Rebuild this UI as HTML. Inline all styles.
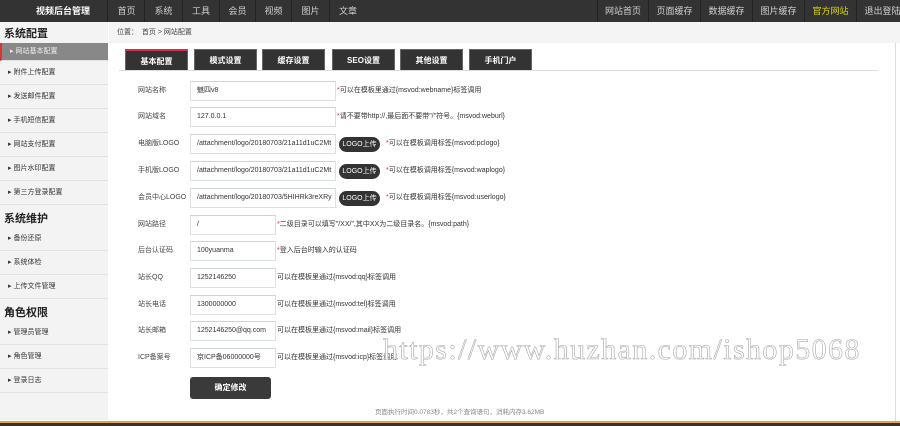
<!DOCTYPE html>
<html><head><meta charset="utf-8">
<style>
*{margin:0;padding:0;box-sizing:border-box}
body{width:900px;height:426px;overflow:hidden;position:relative;background:#fff;font-family:"Liberation Sans","Noto Sans CJK SC",sans-serif;font-size:8px;color:#333}
.hd{position:absolute;left:0;top:0;width:900px;height:22px;background:#333}
.logo{position:absolute;left:0;top:0;width:108px;height:22px;color:#fff;font-weight:bold;font-size:9px;line-height:22px;padding-left:36px;border-right:1px solid #222}
.nav a{position:absolute;top:0;height:22px;line-height:22px;color:#d0d0d0;font-size:9px;text-align:center;border-right:1px solid #222}
.side{position:absolute;left:0;top:22px;width:108px;height:398px;background:#f3f3f3}
.side h3{position:absolute;left:4px;font-size:11px;color:#222;font-weight:bold}
.side .it{position:absolute;left:0;width:108px;height:24px;line-height:24px;padding-left:8px;font-size:7px;color:#333;border-bottom:1px solid #e2e2e2}
.side .it:before{content:"▸ ";font-size:7px}
.side .on{background:#888;color:#eee;border-left:2px solid #d33}
.bc{position:absolute;left:109px;top:22px;width:791px;height:21px;background:#f4f4f4;font-size:7px;line-height:21px;padding-left:8px;color:#444}
.tab{position:absolute;top:49px;height:21px;width:63px;background:#333;color:#fff;font-weight:bold;font-size:8px;text-align:center;line-height:22px;border:1px solid #666;border-bottom:none}
.uline{position:absolute;left:119px;top:70px;width:759px;height:1px;background:#ddd}
.lb{position:absolute;left:138px;font-size:7px;color:#444;line-height:18px}
.in{position:absolute;left:190px;height:20px;border:1px solid #dcdfe3;border-top-color:#cfd3d8;font-size:7px;line-height:18px;padding-left:6px;color:#333;background:#fff;white-space:nowrap;overflow:hidden}
.tip{position:absolute;font-size:7px;line-height:18px;color:#333;white-space:nowrap}
.tip b{color:#e22;font-weight:normal}
.btnl{position:absolute;left:339px;width:41px;height:15px;border-radius:8px;background:#333;color:#fff;font-size:7px;text-align:center;line-height:15px}
.sub{position:absolute;left:190px;top:377px;width:81px;height:22px;background:#3a3a3a;border-radius:3px;color:#fff;font-size:8px;font-weight:bold;text-align:center;line-height:22px}
.ft{position:absolute;left:375px;top:406px;font-size:6.5px;color:#888}
.wm{position:absolute;left:383px;top:333px;font-family:"Liberation Serif",serif;font-size:30px;color:#fff;-webkit-text-stroke:0.6px #aaa;letter-spacing:1.4px}
.bot{position:absolute;left:0;top:421px;width:900px;height:5px;background:#333;border-top:2px solid #e8a050}
.rb{position:absolute;left:895px;top:43px;width:1px;height:378px;background:#ddd}
</style></head><body>
<div class="hd">
<div class="logo">视频后台管理</div>
<div class="nav">
<a style="left:109px;width:36px">首页</a><a style="left:145px;width:38px">系统</a><a style="left:183px;width:37px">工具</a><a style="left:220px;width:36px">会员</a><a style="left:256px;width:36px">视频</a><a style="left:292px;width:38px">图片</a><a style="left:330px;width:36px;border:none">文章</a>
<a style="left:597px;width:52px;border-left:1px solid #222">网站首页</a><a style="left:649px;width:52px">页面缓存</a><a style="left:701px;width:52px">数据缓存</a><a style="left:753px;width:52px">图片缓存</a><a style="left:805px;width:52px;color:#dd0">官方网站</a><a style="left:857px;width:52px">退出登陆</a>
</div></div>
<div class="side">
<h3 style="top:3px">系统配置</h3>
<div class="it on" style="top:21px;height:18px;line-height:18px">网站基本配置</div>
<div class="it" style="top:39px">附件上传配置</div>
<div class="it" style="top:63px">发送邮件配置</div>
<div class="it" style="top:87px">手机短信配置</div>
<div class="it" style="top:111px">网站支付配置</div>
<div class="it" style="top:135px">图片水印配置</div>
<div class="it" style="top:159px">第三方登录配置</div>
<h3 style="top:188px">系统维护</h3>
<div class="it" style="top:205px">备份还原</div>
<div class="it" style="top:229px">系统体检</div>
<div class="it" style="top:253px">上传文件管理</div>
<div class="it" style="top:277px;border:none;height:1px"></div>
<h3 style="top:282px">角色权限</h3>
<div class="it" style="top:299px">管理员管理</div>
<div class="it" style="top:323px">角色管理</div>
<div class="it" style="top:347px">登录日志</div>
</div>
<div class="bc">位置：&nbsp; 首页 &gt; 网站配置</div>
<div class="rb"></div>
<div class="tab" style="left:125px;border-top:2px solid #d2334a">基本配置</div>
<div class="tab" style="left:194px">模式设置</div>
<div class="tab" style="left:262px">缓存设置</div>
<div class="tab" style="left:332px">SEO设置</div>
<div class="tab" style="left:400px">其他设置</div>
<div class="tab" style="left:469px">手机门户</div>
<div class="uline"></div>

<div class="lb" style="top:82px">网站名称</div><div class="in" style="top:81px;width:146px">魅四v8</div><div class="tip" style="left:337px;top:82px"><b>*</b>可以在模板里通过{msvod:webname}标签调用</div>
<div class="lb" style="top:108px">网站域名</div><div class="in" style="top:107px;width:146px">127.0.0.1</div><div class="tip" style="left:337px;top:108px"><b>*</b>请不要带http://,最后面不要带"/"符号。{msvod:weburl}</div>
<div class="lb" style="top:135px">电脑版LOGO</div><div class="in" style="top:134px;width:146px">/attachment/logo/20180703/21a11d1uC2Mt</div><div class="btnl" style="top:137px">LOGO上传</div><div class="tip" style="left:386px;top:135px"><b>*</b>可以在模板调用标签{msvod:pclogo}</div>
<div class="lb" style="top:162px">手机版LOGO</div><div class="in" style="top:161px;width:146px">/attachment/logo/20180703/21a11d1uC2Mt</div><div class="btnl" style="top:164px">LOGO上传</div><div class="tip" style="left:386px;top:162px"><b>*</b>可以在模板调用标签{msvod:waplogo}</div>
<div class="lb" style="top:189px">会员中心LOGO</div><div class="in" style="top:188px;width:146px">/attachment/logo/20180703/5HIHRk3reXRy</div><div class="btnl" style="top:191px">LOGO上传</div><div class="tip" style="left:386px;top:189px"><b>*</b>可以在模板调用标签{msvod:userlogo}</div>
<div class="lb" style="top:216px">网站路径</div><div class="in" style="top:215px;width:86px">/</div><div class="tip" style="left:277px;top:216px"><b>*</b>二级目录可以填写"/XX/",其中XX为二级目录名。{msvod:path}</div>
<div class="lb" style="top:242px">后台认证码</div><div class="in" style="top:241px;width:86px">100yuanma</div><div class="tip" style="left:277px;top:242px"><b>*</b>登入后台时输入的认证码</div>
<div class="lb" style="top:269px">站长QQ</div><div class="in" style="top:268px;width:86px">1252146250</div><div class="tip" style="left:277px;top:269px">可以在模板里通过{msvod:qq}标签调用</div>
<div class="lb" style="top:296px">站长电话</div><div class="in" style="top:295px;width:86px">1300000000</div><div class="tip" style="left:277px;top:296px">可以在模板里通过{msvod:tel}标签调用</div>
<div class="lb" style="top:322px">站长邮箱</div><div class="in" style="top:321px;width:86px">1252146250@qq.com</div><div class="tip" style="left:277px;top:322px">可以在模板里通过{msvod:mail}标签调用</div>
<div class="lb" style="top:349px">ICP备案号</div><div class="in" style="top:348px;width:86px">京ICP备06000000号</div><div class="tip" style="left:277px;top:349px">可以在模板里通过{msvod:icp}标签调用</div>
<div class="sub">确定修改</div>
<div class="ft">页面执行时间0.0783秒，共2个查询语句，消耗内存3.62MB</div>
<div class="wm">https://www.huzhan.com/ishop5068</div>
<div class="bot"></div>
</body></html>
